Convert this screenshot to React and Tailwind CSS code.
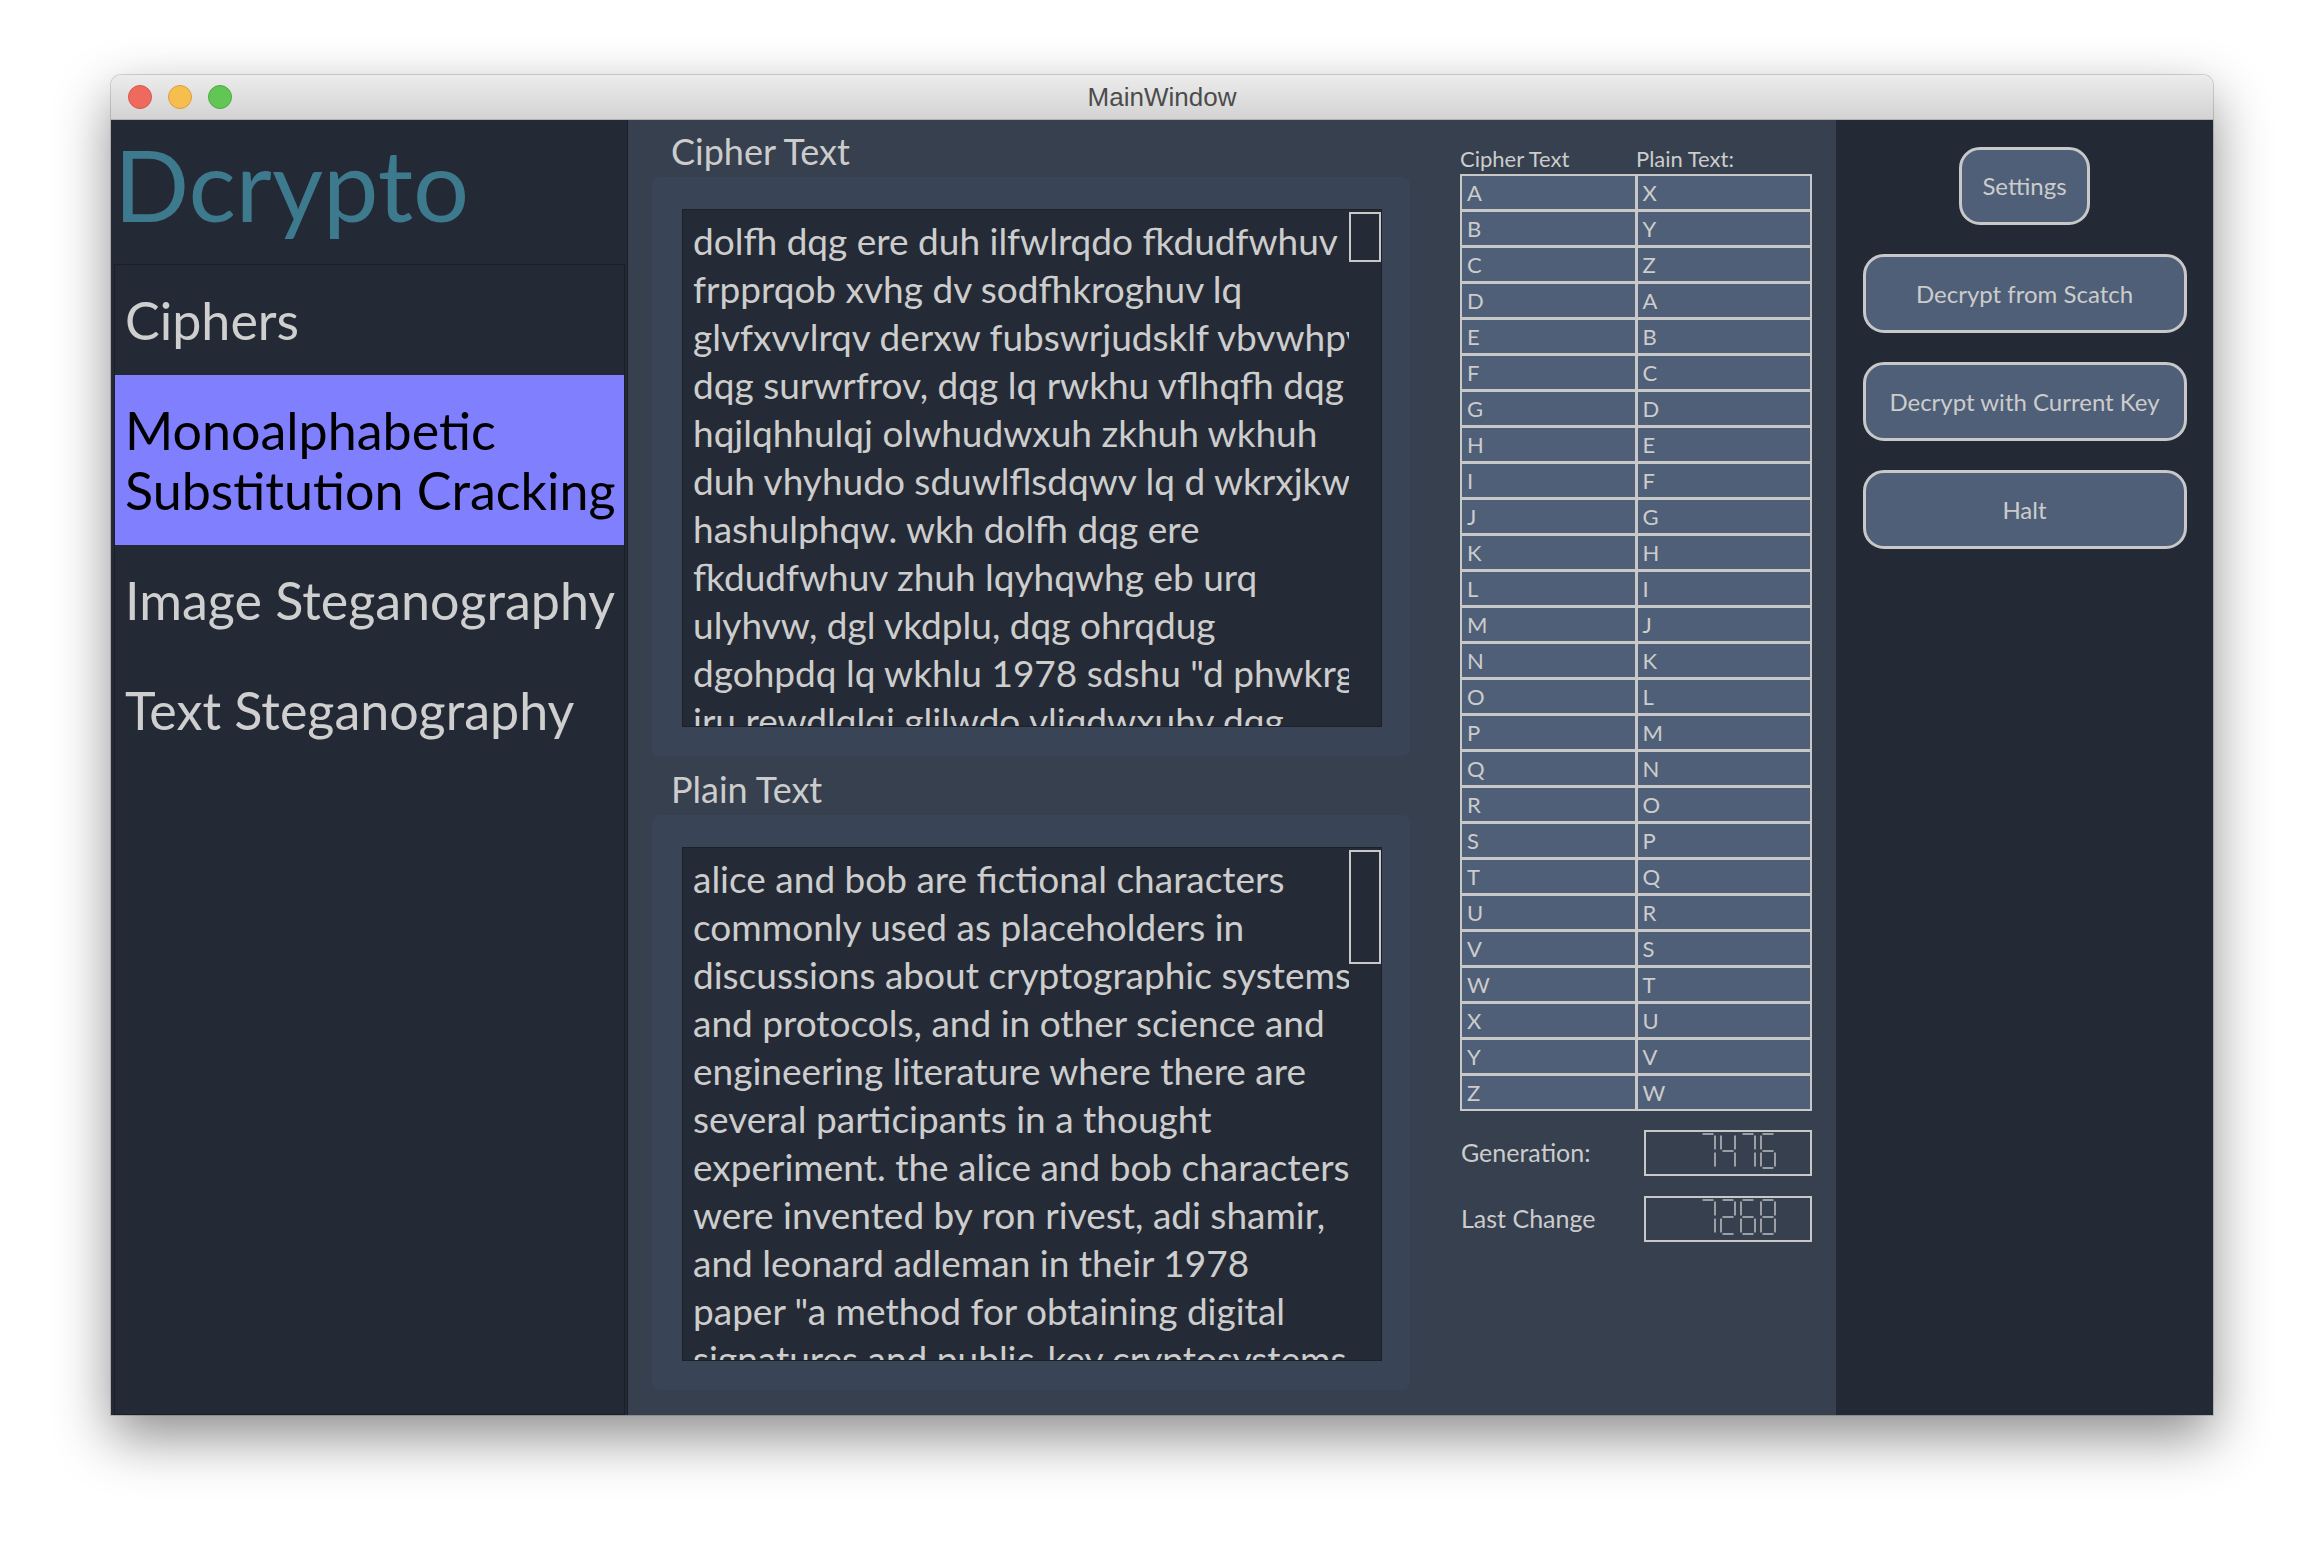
import React from 'react'

const CIPHER_LINES = [
  'dolfh dqg ere duh ilfwlrqdo fkdudfwhuv',
  'frpprqob xvhg dv sodfhkroghuv lq',
  'glvfxvvlrqv derxw fubswrjudsklf vbvwhpv',
  'dqg surwrfrov, dqg lq rwkhu vflhqfh dqg',
  'hqjlqhhulqj olwhudwxuh zkhuh wkhuh',
  'duh vhyhudo sduwlflsdqwv lq d wkrxjkw',
  'hashulphqw. wkh dolfh dqg ere',
  'fkdudfwhuv zhuh lqyhqwhg eb urq',
  'ulyhvw, dgl vkdplu, dqg ohrqdug',
  'dgohpdq lq wkhlu 1978 sdshu "d phwkrg',
  'iru rewdlqlqj gljlwdo vljqdwxuhv dqg',
]

const PLAIN_LINES = [
  'alice and bob are fictional characters',
  'commonly used as placeholders in',
  'discussions about cryptographic systems',
  'and protocols, and in other science and',
  'engineering literature where there are',
  'several participants in a thought',
  'experiment. the alice and bob characters',
  'were invented by ron rivest, adi shamir,',
  'and leonard adleman in their 1978',
  'paper "a method for obtaining digital',
  'signatures and public-key cryptosystems."',
]

const ALPHA = 'ABCDEFGHIJKLMNOPQRSTUVWXYZ'.split('')

// 7 segment outline, digit box 16x36
const SEGMENTS = {
  a: 'M2.5 1 L13.5 1',
  b: 'M15 2.5 L15 16.5',
  c: 'M15 19.5 L15 33.5',
  d: 'M2.5 35 L13.5 35',
  e: 'M1 19.5 L1 33.5',
  f: 'M1 2.5 L1 16.5',
  g: 'M2.5 18 L13.5 18',
}

const DIGIT_SEGS = {
  '2': 'abged',
  '4': 'fgbc',
  '6': 'afgedc',
  '7': 'abc',
  '8': 'abcdefg',
}

function LcdDigit({ d }) {
  return (
    <svg width="16" height="36" viewBox="0 0 16 36" fill="none">
      {DIGIT_SEGS[d].split('').map((s) => (
        <path key={s} d={SEGMENTS[s]} stroke="#c8c8c8" strokeWidth="1.4" />
      ))}
    </svg>
  )
}

function LcdNumber({ value }) {
  return (
    <div className="w-[168px] h-[46px] border-2 border-[#c8c8c8] flex justify-end items-start pt-[1px] pr-[34px] gap-[4px]">
      {value.split('').map((d, i) => (
        <LcdDigit key={i} d={d} />
      ))}
    </div>
  )
}

function TextBox({ lines, handle }) {
  return (
    <div className="flex h-full bg-[#252b36] border border-[#1c2029]">
      <div className="flex-1 overflow-hidden pt-[7px] pl-[10px] text-[37px] text-[#cdcdcd]">
        {lines.map((line, i) => (
          <div key={i} className="h-[48px] leading-[48px] whitespace-pre">
            {line}
          </div>
        ))}
      </div>
      <div className="w-[32px] pt-[2px]">
        <div className={`${handle} border-2 border-[#c8c8c8] bg-[#252b36]`} />
      </div>
    </div>
  )
}

function Button({ children, wide }) {
  return (
    <div
      className={`${
        wide ? 'w-[324px] h-[79px]' : 'w-[131px] h-[78px]'
      } flex items-center justify-center border-[3px] border-[#c8c8c8] rounded-[21px] bg-[#4f5f78] text-[24px] text-[#cccccc]`}
    >
      {children}
    </div>
  )
}

export default function App() {
  return (
    <div className="w-[2324px] h-[1564px] bg-white pt-[75px] pl-[111px] font-[Lato,'Noto_Sans',sans-serif]">
      <div className="w-[2102px] h-[1340px] flex flex-col rounded-t-[10px] shadow-[0_22px_55px_rgba(0,0,0,0.45)] ring-1 ring-black/15">
        {/* Title bar */}
        <div className="relative h-[45px] rounded-t-[10px] bg-gradient-to-b from-[#ececec] to-[#d3d3d3] border-b border-[#b1b1b1] flex items-center justify-center">
          <div className="absolute left-[17px] top-[10px] flex gap-[16px]">
            <div className="w-[24px] h-[24px] rounded-full bg-[#ee6a5f] border border-[#d5574c]" />
            <div className="w-[24px] h-[24px] rounded-full bg-[#f5be4f] border border-[#d9a03c]" />
            <div className="w-[24px] h-[24px] rounded-full bg-[#62c655] border border-[#4ea944]" />
          </div>
          <span className="font-['Liberation_Sans',sans-serif] text-[26px] text-[#4c4c4c]">MainWindow</span>
        </div>

        <div className="flex-1 flex">
          {/* Sidebar */}
          <div className="w-[517px] bg-[#242a35] border-r border-[#1a1e27] flex flex-col">
            <div className="h-[144px] pl-[3px] pt-[5px] text-[99px] leading-[1.2] text-[#3e7a8e]">Dcrypto</div>
            <div className="flex-1 ml-[3px] mr-[2px] border border-[#1a1e27] text-[52px] leading-[60px] text-[#cfcfcf]">
              <div className="py-[25px] pl-[10px]">Ciphers</div>
              <div className="py-[25px] pl-[10px] bg-[#8080ff] text-black">
                Monoalphabetic
                <br />
                Substitution Cracking
              </div>
              <div className="py-[25px] pl-[10px]">Image Steganography</div>
              <div className="py-[25px] pl-[10px]">Text Steganography</div>
            </div>
          </div>

          {/* Center */}
          <div className="w-[1208px] bg-[#36404f] flex pl-[24px] pr-[24px] text-[#cccccc]">
            <div className="w-[758px] pt-[10px] flex flex-col">
              <div className="pl-[19px] h-[42px] leading-[42px] text-[36px]">Cipher Text</div>
              <div className="mt-[5px] rounded-[8px] bg-[#394457] pt-[32px] pb-[29px] pl-[30px] pr-[28px]">
                <div className="h-[518px]">
                  <TextBox lines={CIPHER_LINES} handle="h-[50px]" />
                </div>
              </div>
              <div className="mt-[12px] pl-[19px] h-[42px] leading-[42px] text-[36px]">Plain Text</div>
              <div className="mt-[5px] rounded-[8px] bg-[#394457] pt-[32px] pb-[29px] pl-[30px] pr-[28px]">
                <div className="h-[514px]">
                  <TextBox lines={PLAIN_LINES} handle="h-[114px]" />
                </div>
              </div>
            </div>

            <div className="ml-[50px] w-[352px] pt-[26px] flex flex-col">
              <div className="flex h-[26px] leading-[26px] text-[22px]">
                <span className="w-[176px]">Cipher Text</span>
                <span>Plain Text:</span>
              </div>
              <div className="mt-[2px] bg-[#c8c8c8] p-[2px] grid grid-cols-2 gap-[3px]">
                {ALPHA.map((c, i) => (
                  <React.Fragment key={c}>
                    <div className="h-[33px] bg-[#4f5f78] pl-[5px] text-[22px] leading-[33px]">{c}</div>
                    <div className="h-[33px] bg-[#4f5f78] pl-[5px] text-[22px] leading-[33px]">
                      {ALPHA[(i + 23) % 26]}
                    </div>
                  </React.Fragment>
                ))}
              </div>
              <div className="mt-[19px] flex items-center justify-between">
                <span className="pl-[1px] text-[25px]">Generation:</span>
                <LcdNumber value="7476" />
              </div>
              <div className="mt-[20px] flex items-center justify-between">
                <span className="pl-[1px] text-[25px]">Last Change</span>
                <LcdNumber value="7268" />
              </div>
            </div>
          </div>

          {/* Right panel */}
          <div className="w-[377px] bg-[#242a35] flex flex-col items-center pt-[27px] gap-[29px]">
            <Button>Settings</Button>
            <Button wide>Decrypt from Scatch</Button>
            <Button wide>Decrypt with Current Key</Button>
            <Button wide>Halt</Button>
          </div>
        </div>
      </div>
    </div>
  )
}
